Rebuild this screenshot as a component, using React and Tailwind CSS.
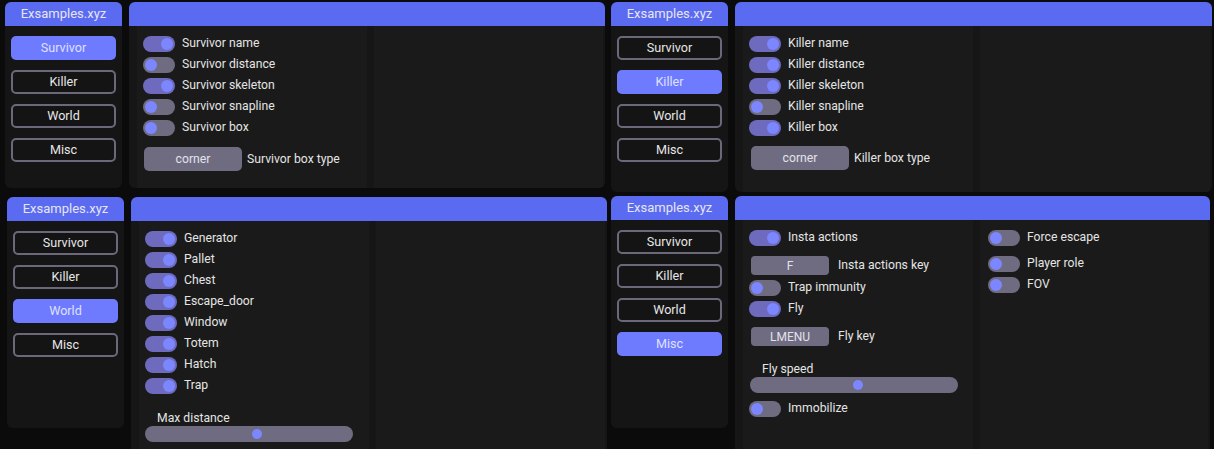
import React from "react";

const TABS = ["Survivor", "Killer", "World", "Misc"];

function Sidebar({ active, className }) {
  return (
    <div className={"flex flex-col w-[117px] shrink-0 rounded-[6px] bg-[#151515] overflow-hidden " + className}>
      <div className="h-[24px] shrink-0 bg-[#5b6bf1] flex items-center justify-center text-[13px] text-[#e6e6f2]">
        Exsamples.xyz
      </div>
      <div className="flex flex-col gap-[10px] px-[6px] pt-[10px]">
        {TABS.map((t) =>
          t === active ? (
            <div key={t} className="h-[24px] rounded-[5px] bg-[#6e7bff] flex items-center justify-center text-[12.6px] text-[#dfe0ff]">
              {t}
            </div>
          ) : (
            <div key={t} className="h-[24px] rounded-[5px] border-2 border-[#6c687c] bg-[#141414] flex items-center justify-center text-[12.6px] text-[#e6e6e6]">
              {t}
            </div>
          )
        )}
      </div>
    </div>
  );
}

function Toggle({ on }) {
  return on ? (
    <div className="w-[32px] h-[16px] shrink-0 rounded-full bg-[#6e6bbf] flex items-center justify-end px-[2px]">
      <div className="w-[12px] h-[12px] rounded-full bg-[#7b86ff]" />
    </div>
  ) : (
    <div className="w-[32px] h-[16px] shrink-0 rounded-full bg-[#6f6c82] flex items-center justify-start px-[2px]">
      <div className="w-[12px] h-[12px] rounded-full bg-[#7b86ff]" />
    </div>
  );
}

function ToggleRow({ on, label }) {
  return (
    <div className="h-[21px] flex items-center gap-[7px]">
      <Toggle on={on} />
      <span className="text-[12.2px] text-[#e4e4e4] whitespace-nowrap">{label}</span>
    </div>
  );
}

function ComboRow({ value, label }) {
  return (
    <div className="flex items-center gap-[5px] pl-[1px]">
      <div className="w-[98px] h-[24px] rounded-[5px] bg-[#6f6c82] flex items-center justify-center text-[12.2px] text-[#e2e2e8]">
        {value}
      </div>
      <span className="text-[12.2px] text-[#e4e4e4] whitespace-nowrap">{label}</span>
    </div>
  );
}

function KeyRow({ value, label, className }) {
  return (
    <div className={"flex items-center gap-[9px] pl-[2px] " + className}>
      <div className="w-[78px] h-[19px] rounded-[4px] bg-[#6f6c82] flex items-center justify-center text-[12px] text-[#e2e2e8]">
        {value}
      </div>
      <span className="text-[12.2px] text-[#e4e4e4] whitespace-nowrap">{label}</span>
    </div>
  );
}

function Slider({ label, knob, className }) {
  return (
    <div className={"flex flex-col " + className}>
      <div className="h-[15px] leading-[15px] pl-[12px] text-[12.2px] text-[#e4e4e4]">{label}</div>
      <div className="w-[208px] h-[16px] rounded-full bg-[#6f6c82] relative">
        <div
          className="absolute top-[3px] w-[10px] h-[10px] rounded-full bg-[#7b86ff]"
          style={{ left: knob - 5 }}
        />
      </div>
    </div>
  );
}

function Content({ className, left, right }) {
  return (
    <div className={"flex flex-col shrink-0 rounded-[6px] bg-[#161616] overflow-hidden " + className}>
      <div className="h-[24px] shrink-0 bg-[#5b6bf1]" />
      <div className="flex flex-1 pl-[8px] pr-[2px] gap-[7px]">
        <div className="w-[230px] shrink-0 bg-[#1a1a1a] pl-[6px] pt-[7px] flex flex-col">{left}</div>
        <div className="flex-1 bg-[#1a1a1a] pl-[8px] pt-[7px] flex flex-col">{right}</div>
      </div>
    </div>
  );
}

export default function App() {
  return (
    <div className="w-[1214px] h-[449px] bg-[#0b0b0b] overflow-hidden flex flex-col font-['Roboto','Noto_Sans',sans-serif]">
      {/* top row */}
      <div className="h-[196px] shrink-0 pt-[2px] flex items-start">
        <Sidebar active="Survivor" className="ml-[5px] h-[186px]" />
        <Content
          className="ml-[7px] w-[476px] h-[186px]"
          left={
            <>
              <ToggleRow on label="Survivor name" />
              <ToggleRow on={false} label="Survivor distance" />
              <ToggleRow on label="Survivor skeleton" />
              <ToggleRow on={false} label="Survivor snapline" />
              <ToggleRow on={false} label="Survivor box" />
              <div className="mt-[9px]">
                <ComboRow value="corner" label="Survivor box type" />
              </div>
            </>
          }
        />
        <Sidebar active="Killer" className="ml-[6px] h-[190px]" />
        <Content
          className="ml-[7px] w-[477px] h-[190px]"
          left={
            <>
              <ToggleRow on label="Killer name" />
              <ToggleRow on label="Killer distance" />
              <ToggleRow on label="Killer skeleton" />
              <ToggleRow on={false} label="Killer snapline" />
              <ToggleRow on label="Killer box" />
              <div className="mt-[8px] pl-[1px]">
                <ComboRow value="corner" label="Killer box type" />
              </div>
            </>
          }
        />
      </div>
      {/* bottom row */}
      <div className="flex items-start">
        <Sidebar active="World" className="ml-[7px] mt-[1px] h-[231px]" />
        <Content
          className="ml-[7px] mt-[1px] w-[476px] h-[260px]"
          left={
            <>
              <ToggleRow on label="Generator" />
              <ToggleRow on label="Pallet" />
              <ToggleRow on label="Chest" />
              <ToggleRow on label="Escape_door" />
              <ToggleRow on label="Window" />
              <ToggleRow on label="Totem" />
              <ToggleRow on label="Hatch" />
              <ToggleRow on label="Trap" />
              <Slider label="Max distance" knob={112} className="mt-[15px]" />
            </>
          }
        />
        <Sidebar active="Misc" className="ml-[4px] h-[232px]" />
        <Content
          className="ml-[7px] w-[475px] h-[260px]"
          left={
            <>
              <ToggleRow on label="Insta actions" />
              <KeyRow value="F" label="Insta actions key" className="mt-[8px]" />
              <div className="mt-[2px]">
                <ToggleRow on={false} label="Trap immunity" />
              </div>
              <ToggleRow on label="Fly" />
              <KeyRow value="LMENU" label="Fly key" className="mt-[8px]" />
              <Slider label="Fly speed" knob={108} className="mt-[16px] pl-[1px]" />
              <div className="mt-[5px]">
                <ToggleRow on={false} label="Immobilize" />
              </div>
            </>
          }
          right={
            <>
              <ToggleRow on={false} label="Force escape" />
              <div className="mt-[5px]">
                <ToggleRow on={false} label="Player role" />
              </div>
              <ToggleRow on={false} label="FOV" />
            </>
          }
        />
      </div>
    </div>
  );
}
